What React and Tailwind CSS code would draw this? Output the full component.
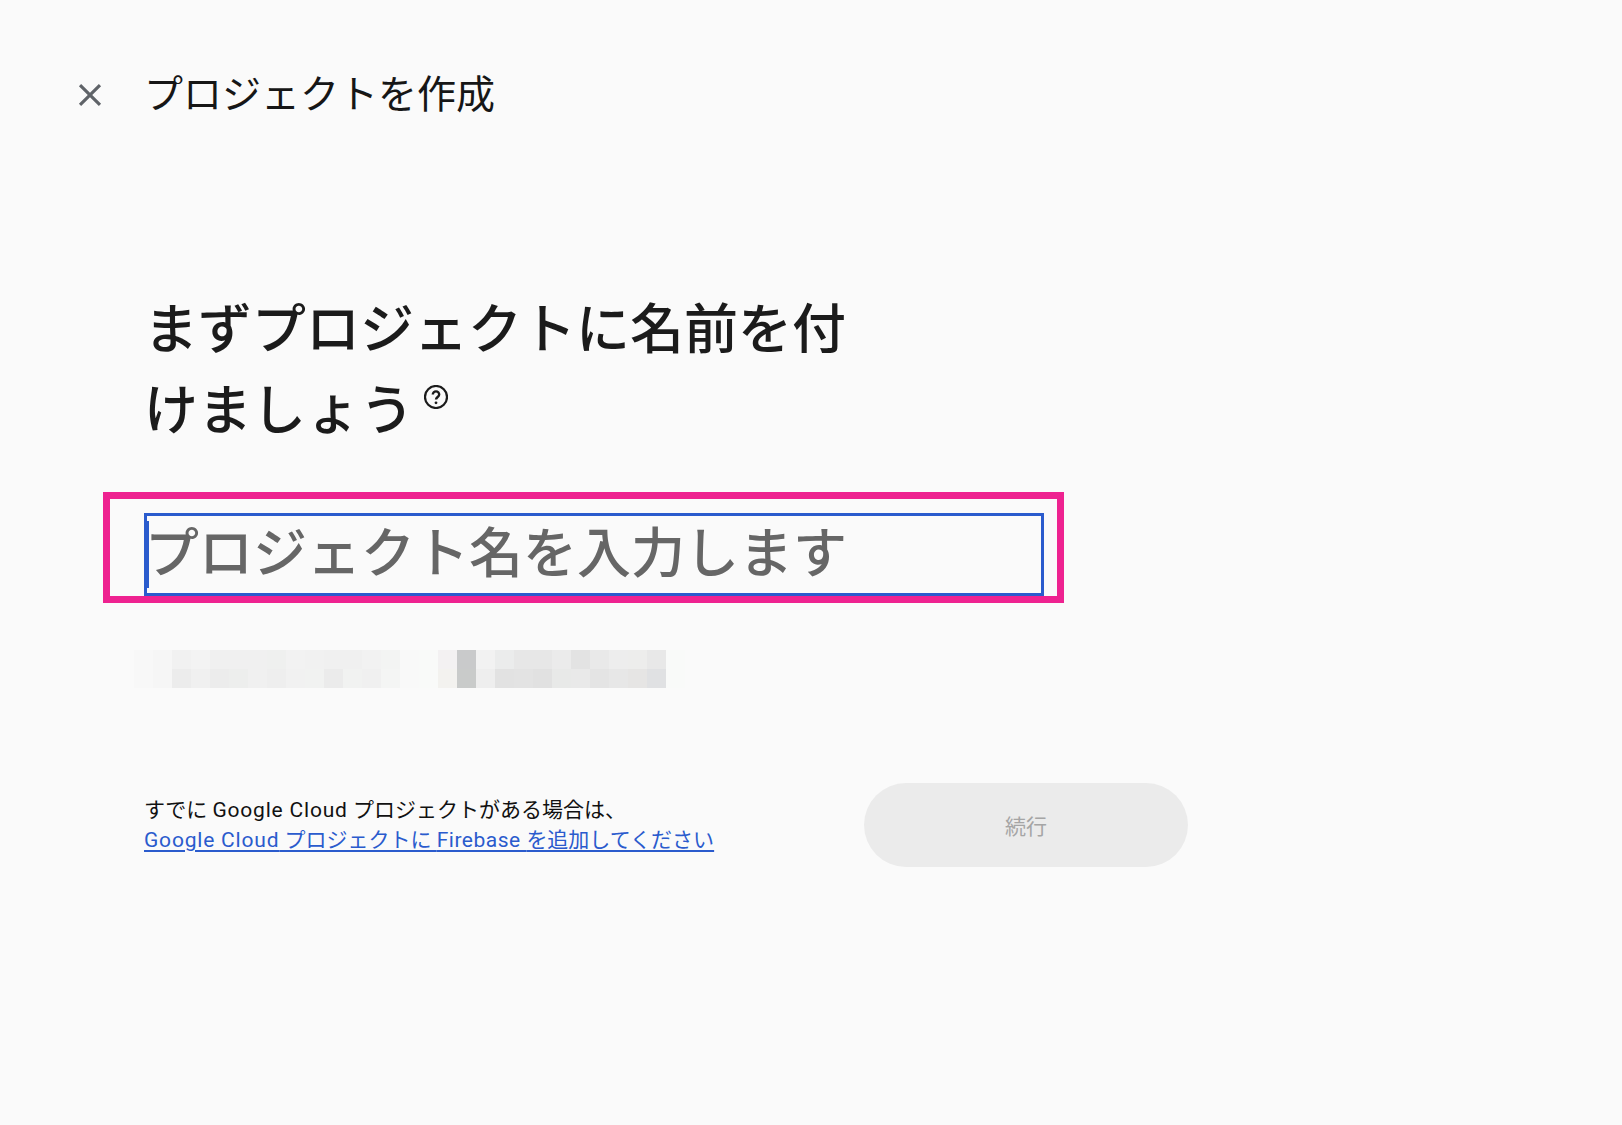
import React from "react";

const row1 = ["bg-[#f8f8f8]","bg-[#f6f6f6]","bg-[#f1f1f1]","bg-[#f3f3f3]","bg-[#f0f0f0]","bg-[#f0f0f0]","bg-[#f0f0f0]","bg-[#eff0ef]","bg-[#f2f2f2]","bg-[#f1f1f1]","bg-[#f0f0f0]","bg-[#f0f0f0]","bg-[#f2f2f2]","bg-[#f3f4f3]","bg-[#f9f9f9]","bg-[#f9faf9]","bg-[#f3f1f2]","bg-[#c9cacb]","bg-[#f2f2f2]","bg-[#ebecec]","bg-[#e7e7e7]","bg-[#e7e7e7]","bg-[#ebebeb]","bg-[#e3e3e3]","bg-[#e9e9e9]","bg-[#ededed]","bg-[#ededec]","bg-[#e8e8e8]","bg-[#f9faf9]"];
const row2 = ["bg-[#f8f8f8]","bg-[#f6f6f6]","bg-[#ececec]","bg-[#f0f0f0]","bg-[#ececec]","bg-[#edeeed]","bg-[#f0f0f0]","bg-[#eeeeee]","bg-[#f1f1f1]","bg-[#f1f2f1]","bg-[#ebebeb]","bg-[#f1f2f1]","bg-[#f0f0f0]","bg-[#f4f5f4]","bg-[#f9f9f9]","bg-[#f9faf9]","bg-[#f3f2ef]","bg-[#c9cbca]","bg-[#eeeeee]","bg-[#e2e2e2]","bg-[#e3e3e3]","bg-[#e1e1e1]","bg-[#e8e9e8]","bg-[#e9e9e9]","bg-[#e4e4e4]","bg-[#e7e7e7]","bg-[#e6e5e4]","bg-[#e0e1e3]","bg-[#f9faf9]"];

const font = "font-['Roboto','Noto_Sans_CJK_JP',sans-serif]";

function Row({ cells }) {
  return (
    <div className="flex">
      {cells.map((c, i) => (
        <div key={i} className={`w-[19px] h-[19px] ${c}`} />
      ))}
    </div>
  );
}

export default function App() {
  return (
    <div className={`min-h-[1125px] bg-[#fafafa] text-[#1b1b1b] ${font}`}>
      <header className="flex items-center pt-[70px] pl-[71px]">
        <svg viewBox="0 0 24 24" className="w-[38px] h-[38px] fill-[#5f6368] shrink-0">
          <path d="M19 6.41L17.59 5 12 10.59 6.41 5 5 6.41 10.59 12 5 17.59 6.41 19 12 13.41 17.59 19 19 17.59 13.41 12z" />
        </svg>
        <h1 className="ml-[35px] text-[39px] leading-[50px] font-normal text-[#161616]">プロジェクトを作成</h1>
      </header>

      <main className="pl-[103px] pt-[170px]">
        <h2 className="ml-[41px] w-[710px] text-[54px] leading-[81px] font-medium">
          まずプロジェクトに名前を付けましょう
          <svg viewBox="0 0 24 24" className="inline-block align-baseline ml-[10px] relative -top-[21px] w-[24px] h-[24px] fill-none stroke-[#1b1b1b]">
            <circle cx="12" cy="12" r="11" strokeWidth="2.2" />
            <path d="M8.8 9.6a3.2 3.2 0 0 1 6.4 0c0 2.3-3.2 2.6-3.2 5" strokeWidth="2.4" />
            <circle cx="12" cy="17.8" r="1.4" fill="#1b1b1b" stroke="none" />
          </svg>
        </h2>

        <div className="mt-[40px] w-[961px] h-[111px] border-[7px] border-[#ee2290] pl-[34px] pr-[13px] pt-[14px]">
          <div className="relative h-[83px] border-[3px] border-[#2a5bcd]">
            <span className="absolute left-0 top-[5px] w-[2px] h-[67px] bg-[#2a5bcd]" />
            <input
              readOnly
              placeholder="プロジェクト名を入力します"
              className="w-full h-full -ml-[2px] bg-transparent outline-none text-[54px] font-medium placeholder:text-[#666666]"
            />
          </div>
        </div>

        <div className="mt-[47px] ml-[31px]">
          <Row cells={row1} />
          <Row cells={row2} />
        </div>

        <div className="mt-[95px] ml-[41px] flex items-start">
          <div className="w-[720px] text-[21px] leading-[30px] pt-[12px]">
            <p className="text-[#111111]">
              すでに <span className="tracking-[0.8px]">Google Cloud</span> プロジェクトがある場合は、
            </p>
            <a href="#" className="text-[#2a5bcd] underline decoration-2 underline-offset-[3px]">
              <span className="tracking-[0.8px]">Google Cloud</span> プロジェクトに <span className="tracking-[0.5px]">Firebase </span>を追加してください
            </a>
          </div>
          <button disabled className="w-[324px] h-[84px] pt-[6px] rounded-[42px] bg-[#ebebeb] text-[#a5a5a5] text-[21px]">続行</button>
        </div>
      </main>
    </div>
  );
}
